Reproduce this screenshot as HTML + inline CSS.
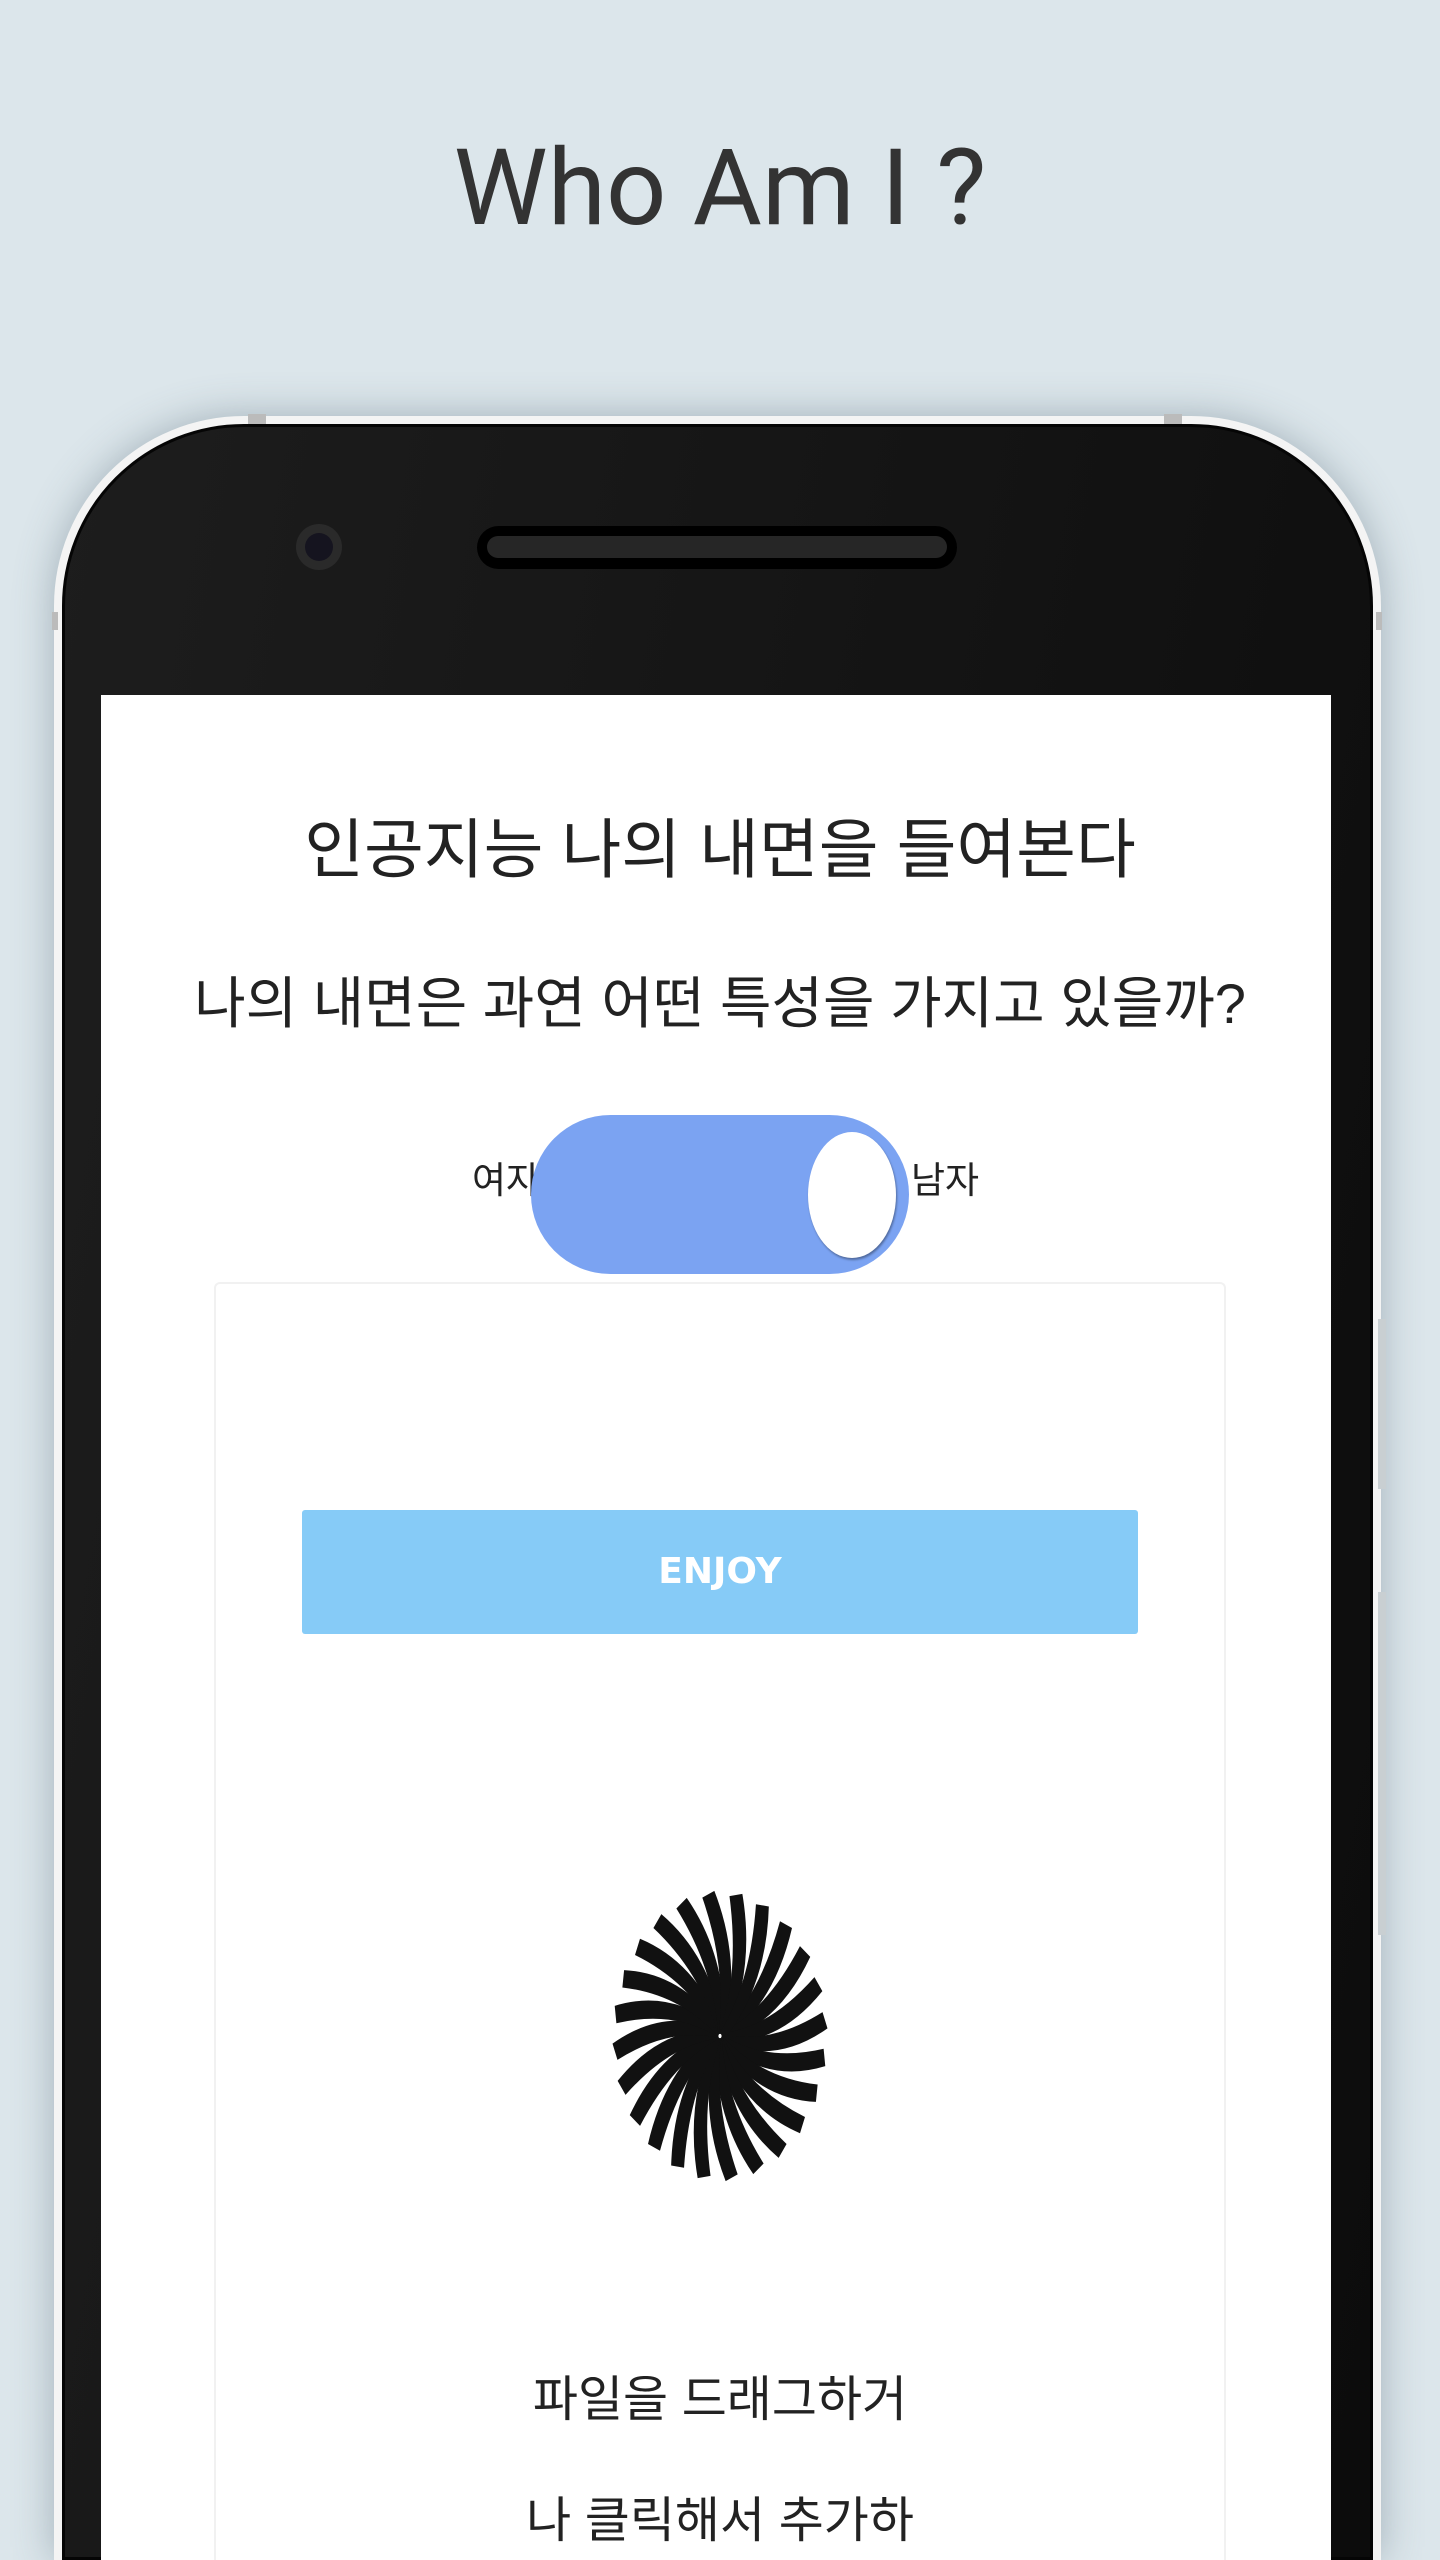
<!DOCTYPE html>
<html style="width:1440px;height:2560px;overflow:hidden"><head><meta charset="utf-8">
<style>
*{margin:0;padding:0;box-sizing:border-box}
body{width:1440px;height:2560px;background:#dce6eb;position:relative;overflow:hidden;font-family:"Liberation Sans","Noto Sans CJK KR",sans-serif}
.title{position:absolute;top:118px;left:0;width:1440px;text-align:center;font-family:"Roboto","Liberation Sans",sans-serif;font-size:106px;color:#333;line-height:140px}
.rim{position:absolute;left:54px;top:416px;width:1327px;height:2144px;background:#f4f4f4;border-radius:190px 190px 0 0;box-shadow:0 0 40px rgba(90,110,125,.45)}
.body{position:absolute;left:62px;top:424px;width:1311px;height:2136px;background:linear-gradient(100deg,#1d1d1d,#0c0c0c);border-radius:182px 182px 0 0;border:3px solid #050505}
.tab{position:absolute;background:#bbb}
.screen{position:absolute;left:101px;top:695px;width:1230px;height:1865px;background:#fff}
.cam{position:absolute;left:296px;top:524px;width:46px;height:46px;border-radius:50%;background:#2a2a2a}
.cam:after{content:"";position:absolute;left:9px;top:9px;width:28px;height:28px;border-radius:50%;background:#15141f}
.spk{position:absolute;left:477px;top:526px;width:480px;height:43px;border-radius:22px;background:#000}
.spk:after{content:"";position:absolute;left:10px;top:10px;right:10px;height:22px;border-radius:11px;background:#262626}
.t1{position:absolute;top:800px;left:0;width:1440px;text-align:center;font-size:65px;color:#222;line-height:100px}
.t2{position:absolute;top:964px;left:0;width:1440px;text-align:center;font-size:56px;color:#222;line-height:80px}
.lab{position:absolute;font-size:37px;color:#222;top:1150px}
.pill{position:absolute;left:531px;top:1115px;width:378px;height:159px;border-radius:80px;background:#7ba3f2}
.knob{position:absolute;left:808px;top:1132px;width:88px;height:126px;border-radius:50%;background:#fff;box-shadow:1px 2px 2px rgba(0,0,0,.35)}
.card{position:absolute;left:214px;top:1282px;width:1012px;height:1278px;border:2px solid #f1f1f1;border-bottom:none;border-radius:6px 6px 0 0}
.btn{position:absolute;left:302px;top:1510px;width:836px;height:124px;background:#86cbf7;border-radius:3px;color:#fff;font-weight:bold;font-size:36px;text-align:center;line-height:124px;font-family:"DejaVu Sans","Liberation Sans",sans-serif}
.t3{position:absolute;left:0;width:1440px;text-align:center;font-size:49px;color:#222}
</style></head><body>
<div class="title">Who Am I ?</div>
<div class="rim"></div>
<div class="tab" style="left:248px;top:414px;width:18px;height:10px"></div>
<div class="tab" style="left:1164px;top:414px;width:18px;height:10px"></div>
<div class="tab" style="left:52px;top:612px;width:6px;height:18px"></div>
<div class="tab" style="left:1376px;top:612px;width:6px;height:18px"></div>
<div class="tab" style="left:1378px;top:1319px;width:8px;height:170px;background:#c9cfd2"></div>
<div class="tab" style="left:1378px;top:1592px;width:8px;height:343px;background:#c9cfd2"></div>
<div class="body"></div>
<div class="cam"></div>
<div class="spk"></div>
<div class="screen"></div>
<div class="t1">인공지능 나의 내면을 들여본다</div>
<div class="t2">나의 내면은 과연 어떤 특성을 가지고 있을까?</div>
<div class="card"></div>
<div class="lab" style="left:472px">여자</div>
<div class="lab" style="left:911px">남자</div>
<div class="pill"></div>
<div class="knob"></div>
<div class="btn">ENJOY</div>
<svg style="position:absolute;left:610px;top:1888px" width="220" height="296" viewBox="-110 -148 220 296">
<g transform="scale(1,1.35)" fill="#111">
<g transform="rotate(0)"><path d="M0,-2 Q40,-30 60,-85 L72,-80 Q55,-25 6,2Z"/></g>
<g transform="rotate(15)"><path d="M0,-2 Q40,-30 60,-85 L72,-80 Q55,-25 6,2Z"/></g>
<g transform="rotate(30)"><path d="M0,-2 Q40,-30 60,-85 L72,-80 Q55,-25 6,2Z"/></g>
<g transform="rotate(45)"><path d="M0,-2 Q40,-30 60,-85 L72,-80 Q55,-25 6,2Z"/></g>
<g transform="rotate(60)"><path d="M0,-2 Q40,-30 60,-85 L72,-80 Q55,-25 6,2Z"/></g>
<g transform="rotate(75)"><path d="M0,-2 Q40,-30 60,-85 L72,-80 Q55,-25 6,2Z"/></g>
<g transform="rotate(90)"><path d="M0,-2 Q40,-30 60,-85 L72,-80 Q55,-25 6,2Z"/></g>
<g transform="rotate(105)"><path d="M0,-2 Q40,-30 60,-85 L72,-80 Q55,-25 6,2Z"/></g>
<g transform="rotate(120)"><path d="M0,-2 Q40,-30 60,-85 L72,-80 Q55,-25 6,2Z"/></g>
<g transform="rotate(135)"><path d="M0,-2 Q40,-30 60,-85 L72,-80 Q55,-25 6,2Z"/></g>
<g transform="rotate(150)"><path d="M0,-2 Q40,-30 60,-85 L72,-80 Q55,-25 6,2Z"/></g>
<g transform="rotate(165)"><path d="M0,-2 Q40,-30 60,-85 L72,-80 Q55,-25 6,2Z"/></g>
<g transform="rotate(180)"><path d="M0,-2 Q40,-30 60,-85 L72,-80 Q55,-25 6,2Z"/></g>
<g transform="rotate(195)"><path d="M0,-2 Q40,-30 60,-85 L72,-80 Q55,-25 6,2Z"/></g>
<g transform="rotate(210)"><path d="M0,-2 Q40,-30 60,-85 L72,-80 Q55,-25 6,2Z"/></g>
<g transform="rotate(225)"><path d="M0,-2 Q40,-30 60,-85 L72,-80 Q55,-25 6,2Z"/></g>
<g transform="rotate(240)"><path d="M0,-2 Q40,-30 60,-85 L72,-80 Q55,-25 6,2Z"/></g>
<g transform="rotate(255)"><path d="M0,-2 Q40,-30 60,-85 L72,-80 Q55,-25 6,2Z"/></g>
<g transform="rotate(270)"><path d="M0,-2 Q40,-30 60,-85 L72,-80 Q55,-25 6,2Z"/></g>
<g transform="rotate(285)"><path d="M0,-2 Q40,-30 60,-85 L72,-80 Q55,-25 6,2Z"/></g>
<g transform="rotate(300)"><path d="M0,-2 Q40,-30 60,-85 L72,-80 Q55,-25 6,2Z"/></g>
<g transform="rotate(315)"><path d="M0,-2 Q40,-30 60,-85 L72,-80 Q55,-25 6,2Z"/></g>
<g transform="rotate(330)"><path d="M0,-2 Q40,-30 60,-85 L72,-80 Q55,-25 6,2Z"/></g>
<g transform="rotate(345)"><path d="M0,-2 Q40,-30 60,-85 L72,-80 Q55,-25 6,2Z"/></g>
</g>
</svg>
<div class="t3" style="top:2360px;line-height:80px">파일을 드래그하거</div>
<div class="t3" style="top:2483px;line-height:77px">나 클릭해서 추가하</div>
</body></html>
